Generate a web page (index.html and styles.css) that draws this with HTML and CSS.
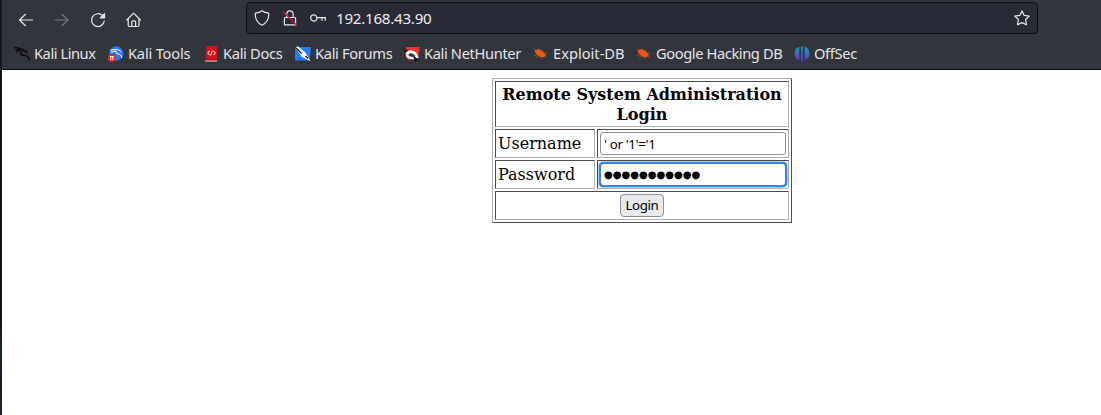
FILE: index.html
```
<!DOCTYPE html>
<html lang="en">
<head>
<meta charset="utf-8">
<title>Remote System Administration Login</title>
<link rel="stylesheet" href="styles.css">
</head>
<body>
<div class="desktop-edge"></div>
<div class="window">
  <header class="chrome">
    <div class="toolbar">
      <nav class="nav-buttons">
        <svg class="icon" viewBox="0 0 16 16"><path d="M14.5 8H1.5M7.5 2.3L1.5 8L7.5 13.7"/></svg>
        <svg class="icon dim" viewBox="0 0 16 16"><path d="M1 8H14M8 2.3L14 8L8 13.7"/></svg>
        <svg class="icon" viewBox="0 0 16 16"><path d="M12.6 3.7A6.4 6.4 0 1 0 14.3 9"/><path class="solid" d="M14.5 1.6V5.8H10.3Z"/></svg>
        <svg class="icon" viewBox="0 0 16 16"><path d="M.8 8L7.6 1.2L14.4 8M2.2 6.8V13Q2.2 14.5 3.7 14.5H11.5Q13 14.5 13 13V6.8M5.8 14.4V10Q5.8 8.8 7 8.8H8.4Q9.6 8.8 9.6 10V14.4"/></svg>
      </nav>
      <div class="urlbar">
        <svg class="icon" viewBox="0 0 16 16"><path d="M8 .8C6 2.3 4 2.9 1.4 3.1C.8 9 3 12.8 8 15.2C13 12.8 15.2 9 14.6 3.1C12 2.9 10 2.3 8 .8Z"/></svg>
        <svg class="icon lock" viewBox="0 0 16 16"><path d="M4.7 7.5V4A3.2 3.2 0 0 1 11.1 4V7.5M3.5 7.5H12.5Q13.6 7.5 13.6 8.6V14.8H2.4V8.6Q2.4 7.5 3.5 7.5Z"/><path class="slash" d="M1.5 2L14.5 15"/></svg>
        <svg class="icon" viewBox="0 0 16 16"><circle cx="3.8" cy="8" r="3.1"/><path d="M7 7.7H15.8M12 7.7V10.3M15.2 7.7V10.3"/></svg>
        <span class="address">192.168.43.90</span>
        <svg class="icon star" viewBox="0 0 16 16"><path d="M8 .9L10.2 5.4L15.2 6L11.6 9.5L12.5 14.7L8 12.6L3.5 14.7L4.4 9.5L.8 6L5.8 5.4Z"/></svg>
      </div>
    </div>
    <nav class="bookmarks">
      <a class="bookmark w-linux"><svg class="fav" viewBox="0 0 16 16"><path class="dragon" d="M0 .8L5 2.2M.6 3.4L6 3.2M2 5.5L7 3.8M5 2.5Q8.4 2 10.5 5L13.8 6.8M10 4.8Q6.5 4 6.5 7Q7 9.5 10.5 9.3Q15 9.4 15.3 15M12.8 4.8L11 4.6"/></svg><span>Kali Linux</span></a>
      <a class="bookmark w-tools"><svg class="fav" viewBox="0 0 16 16"><circle cx="8.3" cy="7.5" r="7.2" fill="#2777ff"/><path d="M2.5 4.2L8 3.4Q11 3.4 13.3 6M3 6.3L8 5Q7.5 8 11 8.2Q13.5 8.8 14 12" fill="none" stroke="#fff" stroke-width="1"/><circle cx="3.8" cy="12" r="3.9" fill="#e8242c"/><path d="M1.7 10.5H5.9M2.9 10.5V14M4.9 10.5V14" fill="none" stroke="#fff"/></svg><span>Kali Tools</span></a>
      <a class="bookmark w-docs"><svg class="fav" viewBox="0 0 16 16"><path d="M2 .5H3.8V13H2Z" fill="#17399b"/><path d="M3.3 0H14V15H3.3Z" fill="#d9121c"/><path d="M2.2 14.3H14V15.6H2.2Z" fill="#d8c9c9"/><path d="M3 13H14V14.3H3Z" fill="#b70d18"/><path d="M6.5 5L4.7 7L6.5 9M10.5 5L12.3 7L10.5 9M9.2 4.5L7.7 9.5" fill="none" stroke="#fff"/></svg><span>Kali Docs</span></a>
      <a class="bookmark w-forums"><svg class="fav" viewBox="0 0 16 16"><path d="M0 1H16L14.5 14.5H0Z" fill="#237cf5"/><path d="M0 1L3 .5L10 6L12.7 10.5L15.5 15L11 13L7 11Z" fill="#fff"/><path d="M0 1L7 7.8M10.5 10L13 12.5" stroke="#222733" stroke-width="1.3" fill="none"/></svg><span>Kali Forums</span></a>
      <a class="bookmark w-hunter"><svg class="fav" viewBox="0 0 16 16"><path d="M2 1H16L14 10L8 6L1 6Z" fill="#ed3036"/><path d="M0 1L5 5L1 10Z" fill="#30262c"/><path d="M1.5 7Q0 12 6 14.5L9 12L3 8Z" fill="#d7202b"/><path d="M2.5 8.3Q5 4.5 9.5 6.5Q12.5 8 13.3 12" fill="none" stroke="#fff" stroke-width="2.8"/><path d="M3 8.3Q3.5 12 7.5 11.8L9.8 13" fill="none" stroke="#fff" stroke-width="2.3"/><path d="M11 11L15.5 15H9Z" fill="#15171d"/></svg><span>Kali NetHunter</span></a>
      <a class="bookmark w-exploit"><svg class="fav bug" viewBox="0 0 16 16"><path d="M1.5 5Q4 2 8 4L11 6.5L13 9.5L10.5 11.2Q6.5 11.5 4 9Z"/><path class="legs" d="M3 4L1 2.7M7 4L6.5 2.5M9 5L10 3.7M11 7L14.5 7.5M3.5 9L1 9.5M5.5 10.5L3 12M9.5 11L8.5 13M12 10L13.5 12"/></svg><span>Exploit-DB</span></a>
      <a class="bookmark w-google"><svg class="fav bug" viewBox="0 0 16 16"><path d="M1.5 5Q4 2 8 4L11 6.5L13 9.5L10.5 11.2Q6.5 11.5 4 9Z"/><path class="legs" d="M3 4L1 2.7M7 4L6.5 2.5M9 5L10 3.7M11 7L14.5 7.5M3.5 9L1 9.5M5.5 10.5L3 12M9.5 11L8.5 13M12 10L13.5 12"/></svg><span>Google Hacking DB</span></a>
      <a class="bookmark w-offsec"><svg class="fav" viewBox="0 0 16 16"><defs><linearGradient id="offsec" x1="0" y1="0" x2="0" y2="16" gradientUnits="userSpaceOnUse"><stop offset="0" stop-color="#12a9bd"/><stop offset="1" stop-color="#6528c9"/></linearGradient></defs><path fill="url(#offsec)" d="M5.3 .8V14.2Q.5 12.5 .5 7.5Q.5 2.5 5.3 .8ZM7.1 .3H8.8V15.5H7.1ZM10.6 .8Q15.5 2.5 15.5 7.5Q15.5 12.5 10.6 14.2Z"/></svg><span>OffSec</span></a>
    </nav>
  </header>
  <main class="page">
    <form>
      <table class="login">
        <colgroup><col class="label-col"><col></colgroup>
        <tr class="title-row"><th colspan="2">Remote System Administration Login</th></tr>
        <tr><td>Username</td><td><input class="field" type="text" value="' or '1'='1"></td></tr>
        <tr><td>Password</td><td><div class="field focused"><span class="dots">●●●●●●●●●●●</span></div></td></tr>
        <tr><td colspan="2" class="submit"><button type="button">Login</button></td></tr>
      </table>
    </form>
  </main>
</div>
</body>
</html>
```
FILE: styles.css
```
* { box-sizing: border-box; }
body { margin: 0; height: 415px; display: flex; overflow: hidden; background: #fff; }
.desktop-edge { width: 2px; background: linear-gradient(#15171e 0 70px, #121318 70px 320px, #17243b 350px, #15171e 385px, #202633 415px); }
.window { flex: 1; }
.chrome { height: 70px; background: #33353d; border-bottom: 1px solid #0c0c0f; font-family: "Noto Sans", sans-serif; color: #e4e4e6; }
.toolbar { display: flex; height: 36px; padding-top: 2px; }
.nav-buttons { width: 244px; display: flex; align-items: center; gap: 20px; padding: 1px 0 0 16px; }
.icon { width: 16px; height: 16px; flex: none; fill: none; stroke: #e9e9eb; stroke-width: 1.2; stroke-linecap: round; stroke-linejoin: round; }
.dim { stroke: #77787e; }
.solid { fill: #e9e9eb; }
.slash { stroke: #d71840; stroke-width: 1.4; }
.urlbar { width: 792px; height: 32px; display: flex; align-items: center; gap: 12px; padding: 0 7px; background: #282a36; border: 1px solid #0e0f15; border-radius: 4px; }
.address { font-size: 15.2px; line-height: 20px; letter-spacing: -.28px; margin-left: -2px; color: #ececef; }
.star { margin-left: auto; }
.bookmarks { display: flex; height: 33px; padding: 2px 0 0 12px; }
.bookmark { display: flex; align-items: center; gap: 4px; font-size: 14.67px; letter-spacing: -.33px; white-space: nowrap; }
.bookmark span { padding-bottom: 2px; }
.fav { width: 16px; height: 16px; flex: none; }
.w-linux { width: 94px; letter-spacing: -.45px; }
.w-tools { width: 95px; letter-spacing: -.2px; }
.w-docs { width: 92px; letter-spacing: -.33px; }
.w-forums { width: 109px; }
.w-hunter { width: 129px; letter-spacing: -.36px; }
.w-exploit { width: 103px; letter-spacing: 0; }
.w-google { width: 158px; letter-spacing: -.4px; }
.dragon { fill: none; stroke: #0b0c10; stroke-width: 1.4; }
.bug { fill: #e95a16; }
.legs { fill: none; stroke: #b94b1c; stroke-width: .8; }
.page { padding: 8px 0 0 490px; }
.login { width: 300px; table-layout: fixed; border-spacing: 2px; border: 1px solid; border-color: #b0b0b0 #4c4c4c #4c4c4c #b0b0b0; font: 16px/20px "DejaVu Serif", serif; color: #000; }
.label-col { width: 100px; }
.login tr { height: 29px; }
.login .title-row { height: 46px; }
.login th, .login td { padding: 2px; border: 1px solid; border-color: #4c4c4c #b0b0b0 #b0b0b0 #4c4c4c; }
.login th { padding: 3px 2px 1px; }
.field { display: block; width: 186px; height: 23px; padding: 1px 3px; border: 1px solid #8f8f9d; border-radius: 3px; background: #fff; color: #000; font: 13.333px/19px "Noto Sans", sans-serif; letter-spacing: -.36px; }
.focused { border-color: #3584e4; outline: 2px solid #3584e4; outline-offset: -1px; box-shadow: 0 0 0 2px #3584e466; }
.dots { display: block; overflow: hidden; letter-spacing: -.08px; font: 10.15px/19px "DejaVu Sans", sans-serif; }
.submit { text-align: center; }
button { display: block; width: 44px; height: 23px; margin: 0 auto; padding: 0; border: 1px solid #8f8f9d; border-radius: 4px; background: #e9e9ed; color: #000; font: 13.333px/21px "Noto Sans", sans-serif; letter-spacing: -.4px; }
```
